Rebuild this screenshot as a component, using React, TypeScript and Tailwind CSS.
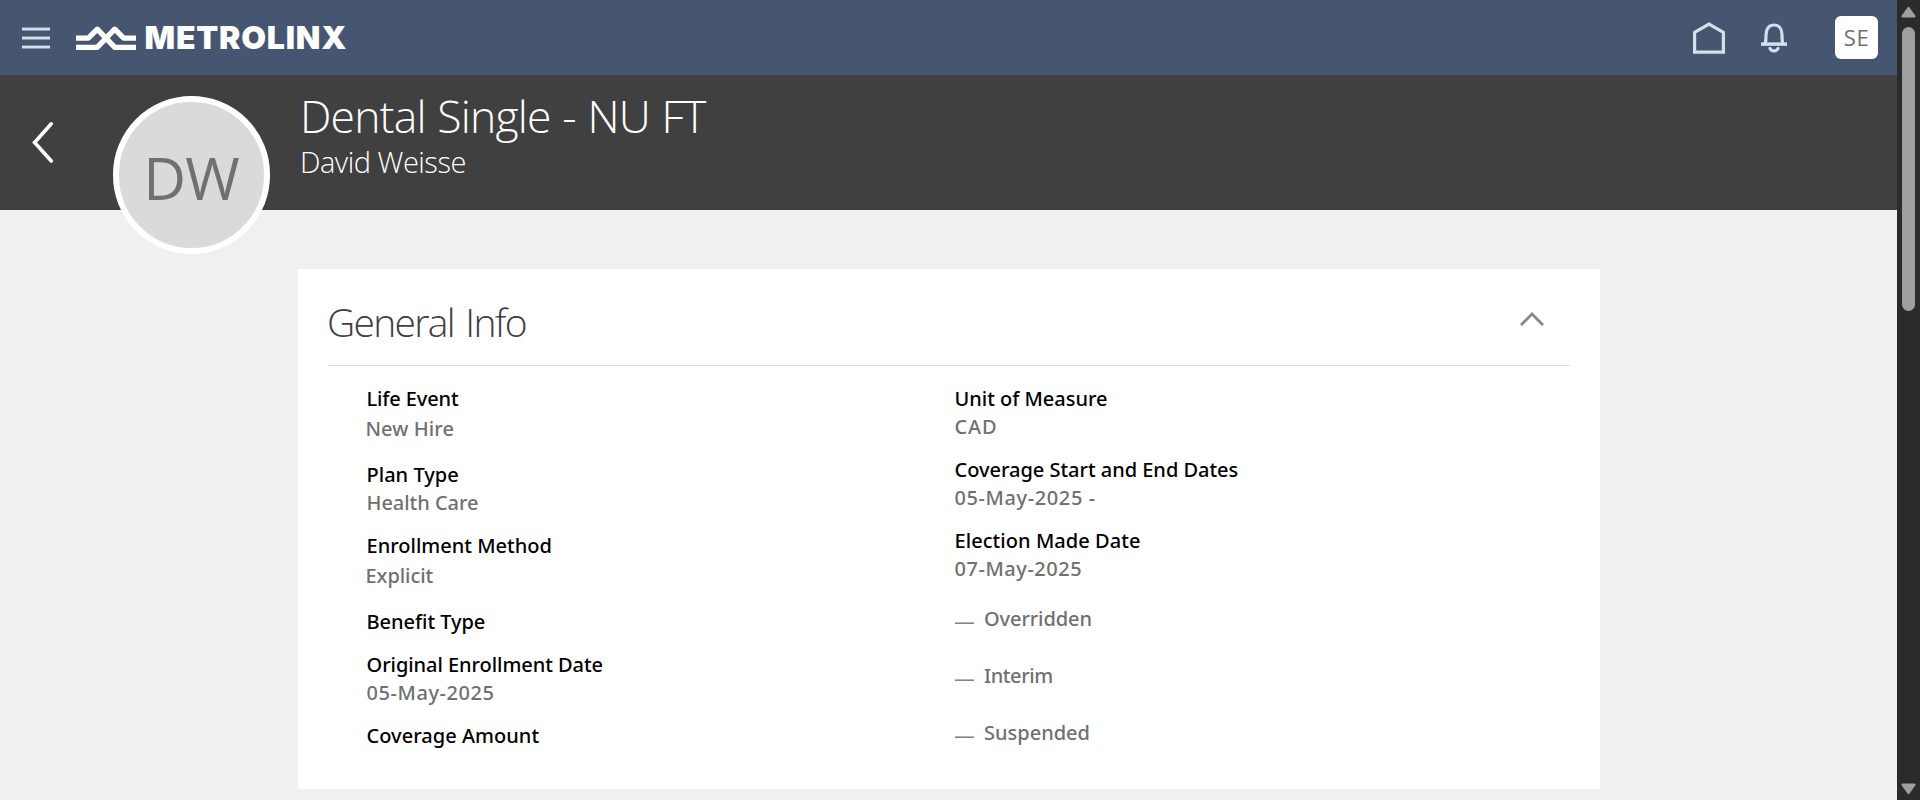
import React from 'react';

type FieldProps = {
  label: string;
  labelClass: string;
  value?: string;
  valueClass?: string;
  select?: boolean;
};

function Field({ label, labelClass, value, valueClass = '', select = false }: FieldProps) {
  return (
    <div className="pb-[15px]">
      <dt className={`h-7 leading-7 whitespace-nowrap text-black ${labelClass}`}>{label}</dt>
      {value && (
        <dd className={`whitespace-nowrap text-[#707070] ${select ? '-ml-px h-[33px] pt-0.5 leading-7' : 'h-7 leading-7'} ${valueClass}`}>
          {value}
        </dd>
      )}
    </div>
  );
}

function Flag({ label, labelClass }: { label: string; labelClass: string }) {
  return (
    <div className="mb-[29px] flex h-7 items-start">
      <span className="mt-[17px] mr-[10.5px] h-0.5 w-[19px] border-t border-[#b5b5b5] bg-[#858585]" />
      <span className={`leading-7 text-[#707070] ${labelClass}`}>{label}</span>
    </div>
  );
}

function TopBar() {
  return (
    <header className="flex h-[75px] items-start bg-[#465671]">
      <button className="mt-[27px] ml-[22px]" aria-label="Menu">
        <svg width="28" height="22" viewBox="0 0 28 22" className="block" fill="#d6e0ec">
          <rect y="0.6" width="28" height="2.9" />
          <rect y="9.6" width="28" height="2.9" />
          <rect y="18.6" width="28" height="2.9" />
        </svg>
      </button>
      <div className="mt-[24px] ml-[26px] flex h-[27px] items-center">
        <svg width="60" height="26" viewBox="0 0 60 26" className="block shrink-0" fill="none" stroke="#fff" strokeWidth="5.3" strokeLinejoin="round">
          <path d="M0 13.2H12.3L21.3 4.2L38.8 22.3H60" />
          <path d="M0 22.3H21.2L38.7 4.2L47.7 13.2H60" />
        </svg>
        <span className="ml-[8.5px] font-['Inter',sans-serif] text-[32px] leading-[27px] font-black tracking-[0.8px] text-white">METROLINX</span>
      </div>
      <div className="mt-4 mr-[19px] ml-auto flex items-start">
        <svg width="32" height="32" viewBox="0 0 32 32" className="mt-1.5 block" fill="none" stroke="#d6e0ec" strokeWidth="3.2">
          <path d="M1.6 10.4L16 2L30.4 10.4V30.2H1.6Z" />
        </svg>
        <svg width="26" height="30" viewBox="0 0 26 30" className="mt-[7px] ml-9 block" fill="none" stroke="#d6e0ec">
          <path d="M4.1 21C5 18.5 5 15 5 11.8C5 5.8 8 2 13 2S21 5.8 21 11.8C21 15 21 18.5 21.9 21" strokeWidth="3.2" />
          <path d="M0 21.1H26" strokeWidth="3.5" />
          <path d="M8.9 25.4C10.4 28.8 15.6 28.8 17.1 25.4" strokeWidth="3" strokeLinecap="round" />
        </svg>
        <div className="ml-12 flex h-[43px] w-[43px] items-center justify-center rounded-md bg-white pb-0.5 font-['Open_Sans',sans-serif] text-[22px] leading-none tracking-[0.6px] text-[#707070]">
          <span>SE</span>
        </div>
      </div>
    </header>
  );
}

function PersonBanner() {
  return (
    <section className="flex h-[135px] items-start bg-[#404040] font-['Open_Sans',sans-serif] text-white">
      <button className="mt-[46px] ml-[31px]" aria-label="Back">
        <svg width="24" height="44" viewBox="0 0 24 44" className="block" fill="none" stroke="#fff" strokeWidth="3.6" strokeLinecap="round">
          <path d="M20.3 2.8L3.6 21.5L20.3 40" />
        </svg>
      </button>
      <div className="relative z-10 mt-[21px] ml-[58px] flex h-[158px] w-[157px] shrink-0 items-center justify-center rounded-full border-[6px] border-white bg-[#dadada]">
        <span className="mt-[3px] mr-[1px] text-[59px] leading-[60px] tracking-[-1px] text-[#707070]">DW</span>
      </div>
      <div className="ml-[30px]">
        <h1 className="mt-[13px] h-14 text-[44.5px] leading-[56px] font-light tracking-[-0.84px] whitespace-nowrap [word-spacing:1px]">Dental Single - NU FT</h1>
        <p className="-mt-0.5 h-10 text-[29px] leading-10 font-light tracking-[-0.5px] whitespace-nowrap">David Weisse</p>
      </div>
    </section>
  );
}

function GeneralInfo() {
  return (
    <section className="mt-[59px] ml-[298px] h-[520px] w-[1302px] bg-white px-[30px]">
      <div className="flex h-[97px] items-start justify-between border-b border-[#d4dce2]">
        <h2 className="mt-[26px] -ml-px font-['Open_Sans',sans-serif] text-[39px] leading-[54px] font-light tracking-[-1.7px] text-[#404040] [word-spacing:3px]">General Info</h2>
        <svg width="26" height="16" viewBox="0 0 26 16" className="mt-[41.5px] mr-[25px] block" fill="none" stroke="#858789" strokeWidth="2.8" strokeLinecap="round">
          <path d="M2.8 13.3L13 3L23.2 13.3" />
        </svg>
      </div>
      <div className="flex pt-[19px] pl-[38.5px] font-['Noto_Sans',sans-serif] text-[20px] font-medium">
        <dl className="w-[588px]">
          <Field label="Life Event" labelClass="tracking-[-0.12px]" value="New Hire" valueClass="tracking-[0.09px]" select />
          <Field label="Plan Type" labelClass="tracking-[0.02px]" value="Health Care" valueClass="tracking-[-0.04px]" />
          <Field label="Enrollment Method" labelClass="tracking-[0.01px]" value="Explicit" valueClass="tracking-[-0.06px]" select />
          <Field label="Benefit Type" labelClass="tracking-[-0.04px]" />
          <Field label="Original Enrollment Date" labelClass="tracking-[-0.05px]" value="05-May-2025" valueClass="tracking-[0.56px]" />
          <Field label="Coverage Amount" labelClass="tracking-[0.03px]" />
        </dl>
        <div>
          <dl>
            <Field label="Unit of Measure" labelClass="tracking-[-0.02px]" value="CAD" valueClass="tracking-[0.9px]" />
            <Field label="Coverage Start and End Dates" labelClass="tracking-[-0.02px]" value="05-May-2025 -" valueClass="tracking-[0.6px]" />
            <Field label="Election Made Date" labelClass="tracking-[0.06px]" value="07-May-2025" valueClass="tracking-[0.54px]" />
          </dl>
          <div className="pt-[7px]">
            <Flag label="Overridden" labelClass="tracking-[-0.1px]" />
            <Flag label="Interim" labelClass="tracking-[-0.4px]" />
            <Flag label="Suspended" labelClass="tracking-normal" />
          </div>
        </div>
      </div>
    </section>
  );
}

function ScrollTrack() {
  return (
    <div className="flex w-[23px] shrink-0 flex-col items-center bg-[#2b2b2b]">
      <svg width="15" height="12" viewBox="0 0 15 12" className="mt-1.5 block" fill="#9f9f9f" stroke="#9f9f9f" strokeWidth="2" strokeLinejoin="round">
        <path d="M7.5 1.8L13.6 10.4H1.4Z" />
      </svg>
      <div className="mt-[9px] h-[284px] w-[13px] rounded-full bg-[#9f9f9f]" />
      <svg width="15" height="12" viewBox="0 0 15 12" className="mt-auto mb-[5px] block" fill="#9f9f9f" stroke="#9f9f9f" strokeWidth="2" strokeLinejoin="round">
        <path d="M7.5 10.2L13.6 1.6H1.4Z" />
      </svg>
    </div>
  );
}

export default function App() {
  return (
    <div className="flex h-[800px] w-[1920px] overflow-hidden bg-[#f0f0f0]">
      <main className="min-w-0 flex-1">
        <TopBar />
        <PersonBanner />
        <GeneralInfo />
      </main>
      <ScrollTrack />
    </div>
  );
}
